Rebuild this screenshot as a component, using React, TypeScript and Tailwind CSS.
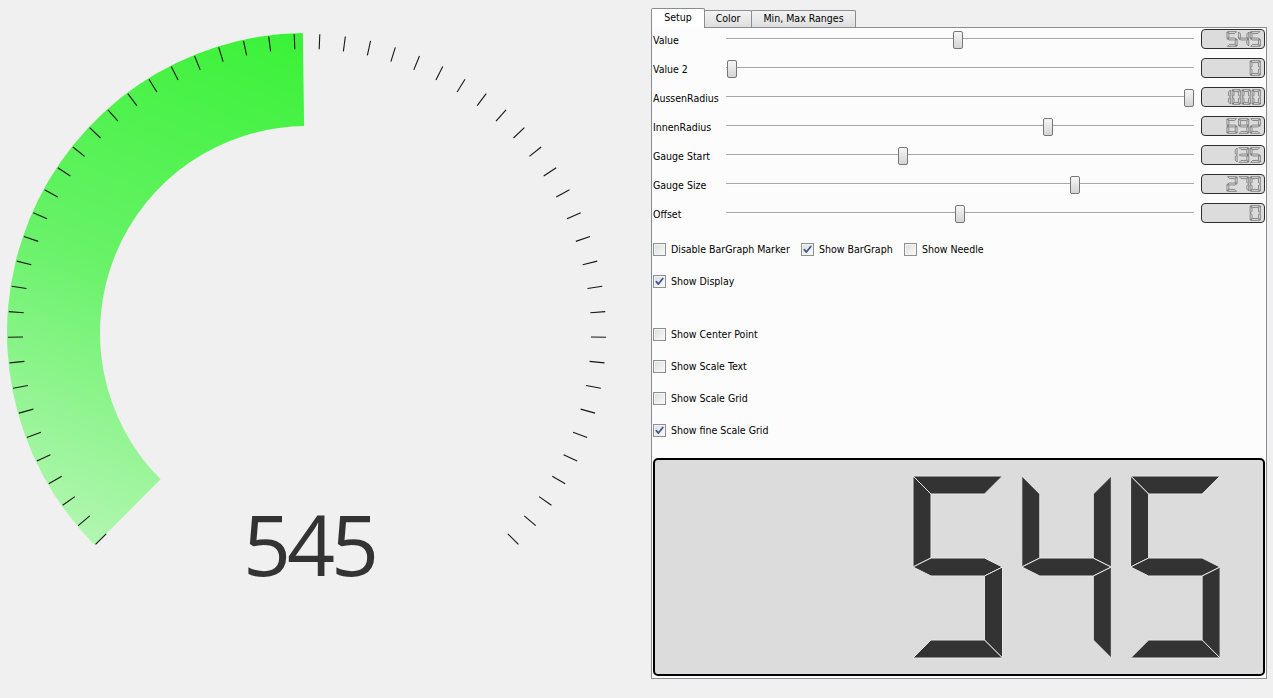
import React from "react";

// geometry of the round gauge on the left
const CX = 307;
const CY = 333;
const R_OUT = 300;
const R_IN = 207;

const rad = (d: number) => (d * Math.PI) / 180;
const pt = (r: number, a: number) => [CX + r * Math.cos(rad(a)), CY + r * Math.sin(rad(a))];
const f = (p: number[]) => `${p[0].toFixed(2)} ${p[1].toFixed(2)}`;

// segment lists for the 7-seg digits
const DIGITS: Record<string, string> = {
  "0": "abcdef",
  "1": "bc",
  "2": "abged",
  "3": "abgcd",
  "4": "fgbc",
  "5": "afgcd",
  "6": "afgedc",
  "7": "abc",
  "8": "abcdefg",
  "9": "abcdfg",
};

function segments(x0: number, y0: number, w: number, h: number, t: number) {
  const ym = y0 + h / 2;
  const x1 = x0 + w;
  const y1 = y0 + h;
  return {
    a: [[x0, y0], [x1, y0], [x1 - t, y0 + t], [x0 + t, y0 + t]],
    b: [[x1, y0], [x1, ym], [x1 - t, ym - t / 2], [x1 - t, y0 + t]],
    c: [[x1, ym], [x1, y1], [x1 - t, y1 - t], [x1 - t, ym + t / 2]],
    d: [[x0, y1], [x0 + t, y1 - t], [x1 - t, y1 - t], [x1, y1]],
    e: [[x0, ym], [x0 + t, ym + t / 2], [x0 + t, y1 - t], [x0, y1]],
    f: [[x0, y0], [x0 + t, y0 + t], [x0 + t, ym - t / 2], [x0, ym]],
    g: [[x0, ym], [x0 + t, ym - t / 2], [x1 - t, ym - t / 2], [x1, ym], [x1 - t, ym + t / 2], [x0 + t, ym + t / 2]],
  } as Record<string, number[][]>;
}

// pull a polygon towards its centre a bit so segments get small gaps
function shrink(poly: number[][], k: number) {
  if (k === 1) return poly;
  const cx = poly.reduce((s, p) => s + p[0], 0) / poly.length;
  const cy = poly.reduce((s, p) => s + p[1], 0) / poly.length;
  return poly.map((p) => [cx + (p[0] - cx) * k, cy + (p[1] - cy) * k]);
}

type DigitProps = { ch: string; x: number; y: number; w: number; h: number; t: number; fill: string; stroke: string; sw: number; k?: number };

function Digit({ ch, x, y, w, h, t, fill, stroke, sw, k = 1 }: DigitProps) {
  const segs = segments(x, y, w, h, t);
  return (
    <g>
      {DIGITS[ch].split("").map((s) => (
        <polygon
          key={s}
          points={shrink(segs[s], k).map((p) => p.map((n) => n.toFixed(2)).join(",")).join(" ")}
          fill={fill}
          stroke={stroke}
          strokeWidth={sw}
          strokeLinejoin="round"
        />
      ))}
    </g>
  );
}

function Gauge() {
  const endA = 269.2;
  const o1 = pt(R_OUT, 135);
  const o2 = pt(R_OUT, endA);
  const i2 = pt(R_IN, endA);
  const i1 = pt(R_IN, 135);
  const bar = `M ${f(o1)} A ${R_OUT} ${R_OUT} 0 0 1 ${f(o2)} L ${f(i2)} A ${R_IN} ${R_IN} 0 0 0 ${f(i1)} Z`;

  const ticks = [];
  for (let i = 0; i < 56; i++) {
    const a = 135 + (i * 270) / 55;
    const p1 = pt(284, a);
    const p2 = pt(299, a);
    ticks.push(<line key={i} x1={p1[0]} y1={p1[1]} x2={p2[0]} y2={p2[1]} stroke="#151515" strokeWidth={1.1} />);
  }

  return (
    <svg width="651" height="698" viewBox="0 0 651 698" className="block shrink-0">
      <defs>
        <linearGradient id="barGrad" gradientUnits="userSpaceOnUse" x1="310" y1="50" x2="110" y2="540">
          <stop offset="0" stopColor="#3cf239" />
          <stop offset="0.5" stopColor="#66f266" />
          <stop offset="1" stopColor="#aff6ae" />
        </linearGradient>
      </defs>
      <path d={bar} fill="url(#barGrad)" />
      {ticks}
      <text x="309" y="576" textAnchor="middle" fontFamily="'Open Sans', 'Noto Sans', sans-serif" fontSize="84" fill="#333333" letterSpacing="-4">
        545
      </text>
    </svg>
  );
}

// small outlined lcd on each slider row
function SmallLcd({ value }: { value: string }) {
  const long = value.length > 3;
  const w = long ? 8.5 : 10.5;
  const pitch = long ? 10 : 11.6;
  const chars = value.split("");
  return (
    <div className="w-[64px] h-[20px] rounded-[4px] border border-[#2e2e2e] bg-[#dcdcdc] shrink-0">
      <svg width="62" height="18" viewBox="0 0 62 18" className="block">
        {chars.map((ch, i) => {
          const x = 58.5 - w - (chars.length - 1 - i) * pitch;
          return <Digit key={i} ch={ch} x={x} y={1.5} w={w} h={15} t={2.2} k={0.86} fill="none" stroke="#444444" sw={0.55} />;
        })}
      </svg>
    </div>
  );
}

const sliders = [
  { label: "Value", pos: 953, lcd: "545" },
  { label: "Value 2", pos: 726.5, lcd: "0" },
  { label: "AussenRadius", pos: 1184, lcd: "1000" },
  { label: "InnenRadius", pos: 1043, lcd: "692" },
  { label: "Gauge Start", pos: 898, lcd: "135" },
  { label: "Gauge Size", pos: 1070, lcd: "270" },
  { label: "Offset", pos: 955, lcd: "0" },
];

function SliderRow({ label, pos, lcd }: { label: string; pos: number; lcd: string }) {
  return (
    <div className="flex items-start h-[29px]">
      <div className="w-[73px] pt-[5px] leading-[13px] whitespace-nowrap">{label}</div>
      <div className="relative w-[468px] h-[29px]">
        <div className="absolute left-0 right-0 top-[9px] h-[2px] border-t border-[#a6a6a6] border-b border-b-white" />
        <div
          className="absolute top-[2px] w-[10px] h-[18px] rounded-[2px] border border-[#767676] bg-linear-to-b from-[#f6f6f6] to-[#d4d4d4]"
          style={{ left: pos - 726 }}
        />
      </div>
      <div className="w-[7px]" />
      <SmallLcd value={lcd} />
    </div>
  );
}

function Check({ label, checked }: { label: string; checked?: boolean }) {
  return (
    <div className="flex items-center">
      <div className="relative w-[13px] h-[13px] border border-[#8e8f8f] bg-linear-to-br from-[#dcdcdc] to-[#fbfbfb] shadow-[inset_0_0_0_1px_#f4f4f4] shrink-0">
        {checked && (
          <svg width="11" height="11" viewBox="0 0 11 11" className="absolute left-0 top-0">
            <path d="M2.3 5.6 L4.4 8.1 L8.8 2.4" fill="none" stroke="#3f5690" strokeWidth="1.7" strokeLinecap="round" strokeLinejoin="round" />
          </svg>
        )}
      </div>
      <span className="ml-[5px] leading-[13px] whitespace-nowrap">{label}</span>
    </div>
  );
}

export default function App() {
  return (
    <div className="w-[1273px] h-[698px] bg-[#f0f0f0] flex overflow-hidden text-[10.5px] text-black font-['DejaVu_Sans_Condensed','Liberation_Sans',sans-serif]">
      <Gauge />

      {/* panel with tabs */}
      <div className="pt-[7px] w-[622px]">
        <div className="flex items-end h-[20px] relative z-10">
          <div className="w-[54px] h-[20px] mb-[-1px] bg-white border border-b-0 border-[#898c95] rounded-t-[2px] flex items-center justify-center pb-[1px]">
            Setup
          </div>
          <div className="w-[48px] h-[17px] ml-[-1px] border border-b-0 border-[#8c8e94] bg-linear-to-b from-[#f3f3f3] to-[#dedede] rounded-t-[2px] flex items-center justify-center">
            Color
          </div>
          <div className="w-[105px] h-[17px] ml-[-1px] border border-b-0 border-[#8c8e94] bg-linear-to-b from-[#f3f3f3] to-[#dedede] rounded-t-[2px] flex items-center justify-center">
            Min, Max Ranges
          </div>
        </div>

        <div className="w-[616px] h-[652px] border border-[#898c95] bg-[#fcfcfc] px-[1px] pt-[1px]">
          {sliders.map((s) => (
            <SliderRow key={s.label} {...s} />
          ))}

          <div className="mt-[1px] h-[32px] flex items-center">
            <div className="w-[148px]">
              <Check label="Disable BarGraph Marker" />
            </div>
            <div className="w-[103px]">
              <Check label="Show BarGraph" checked />
            </div>
            <Check label="Show Needle" />
          </div>
          <div className="h-[32px] flex items-center">
            <Check label="Show Display" checked />
          </div>
          <div className="h-[21px]" />
          <div className="h-[32px] flex items-center">
            <Check label="Show Center Point" />
          </div>
          <div className="h-[32px] flex items-center">
            <Check label="Show Scale Text" />
          </div>
          <div className="h-[32px] flex items-center">
            <Check label="Show Scale Grid" />
          </div>
          <div className="h-[32px] flex items-center">
            <Check label="Show fine Scale Grid" checked />
          </div>

          {/* big lcd */}
          <div className="mt-[12px] h-[218px] rounded-[5px] border-2 border-black bg-[#dcdcdc]">
            <svg width="608" height="214" viewBox="0 0 608 214" className="block">
              {["5", "4", "5"].map((ch, i) => (
                <Digit key={i} ch={ch} x={258 + i * 108.8} y={16} w={89.5} h={182} t={18} fill="#333333" stroke="#e6e6e6" sw={1} />
              ))}
            </svg>
          </div>
        </div>
      </div>
    </div>
  );
}
